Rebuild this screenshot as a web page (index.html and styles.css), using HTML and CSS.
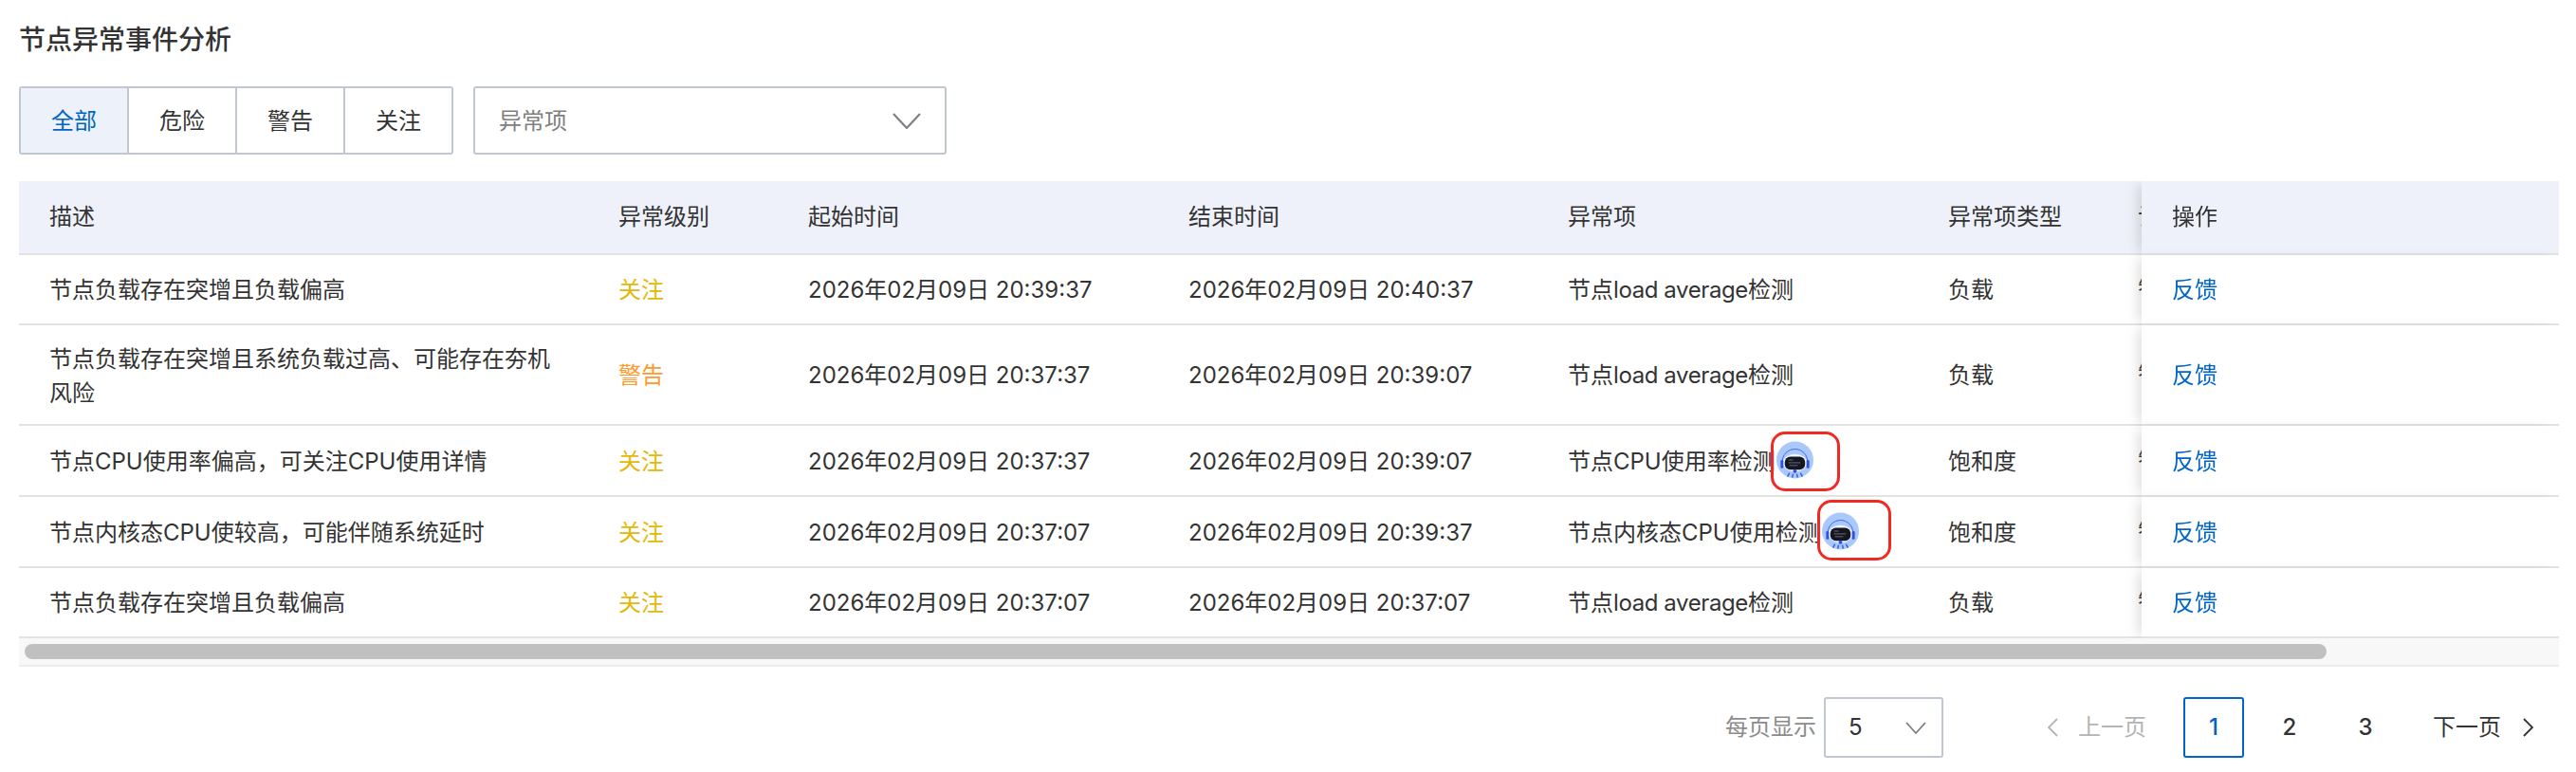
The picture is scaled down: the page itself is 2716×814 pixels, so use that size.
FILE: index.html
```html
<!DOCTYPE html>
<html lang="zh-CN">
<head>
<meta charset="utf-8">
<title>节点异常事件分析</title>
<link rel="stylesheet" href="styles.css">
</head>
<body>
<svg class="defs" width="0" height="0" aria-hidden="true">
  <symbol id="bot" viewBox="0 0 40 40">
    <circle cx="20" cy="20" r="20" fill="#a9c9fc"/>
    <path d="M6 24 C6 3 34 3 34 24" fill="none" stroke="#3f63ea" stroke-width="1"/>
    <ellipse cx="20" cy="23" rx="13" ry="9.5" fill="#f1f5fe"/>
    <rect x="4.5" y="20" width="3" height="9" rx="1.4" fill="#2f50e0"/>
    <rect x="32.5" y="20" width="3" height="9" rx="1.4" fill="#2f50e0"/>
    <rect x="9" y="16.5" width="22" height="14" rx="6" fill="#15171f"/>
    <path d="M13 20h5M13 23h13M14 26h9" stroke="#858ba8" stroke-width=".7" fill="none"/>
    <circle cx="20" cy="32" r="2" fill="#2f50e0"/>
    <path d="M12 38l2-4M17 39l1-4M23 39l-1-4M28 38l-2-4" stroke="#3d62e8" stroke-width="1.6" fill="none"/>
  </symbol>
</svg>
<main class="page">
  <h1 class="title">节点异常事件分析</h1>
  <div class="filters">
    <div class="tabs">
      <button class="tab tab-active">全部</button>
      <button class="tab">危险</button>
      <button class="tab">警告</button>
      <button class="tab">关注</button>
    </div>
    <div class="select">
      <span class="placeholder">异常项</span>
      <svg class="select-arrow" viewBox="0 0 30 17"><path d="M1 1l14 15L29 1" fill="none" stroke="#7d8288" stroke-width="2.2"/></svg>
    </div>
  </div>
  <div class="table-wrap">
    <table class="table">
      <colgroup>
        <col class="c-desc"><col class="c-level"><col class="c-start"><col class="c-end"><col class="c-item"><col class="c-type"><col class="c-extra"><col class="c-op">
      </colgroup>
      <thead>
        <tr><th>描述</th><th>异常级别</th><th>起始时间</th><th>结束时间</th><th>异常项</th><th>异常项类型</th><th>诊断结果</th><th class="op">操作</th></tr>
      </thead>
      <tbody>
        <tr><td>节点负载存在突增且负载偏高</td><td class="attn">关注</td><td>2026年02月09日 20:39:37</td><td>2026年02月09日 20:40:37</td><td>节点<span class="latin">load average</span>检测</td><td>负载</td><td>智能诊断</td><td class="op"><a class="link">反馈</a></td></tr>
        <tr><td class="wrap">节点负载存在突增且系统负载过高、可能存在夯机风险</td><td class="warn">警告</td><td>2026年02月09日 20:37:37</td><td>2026年02月09日 20:39:07</td><td>节点<span class="latin">load average</span>检测</td><td>负载</td><td>智能诊断</td><td class="op"><a class="link">反馈</a></td></tr>
        <tr class="r3"><td>节点CPU使用率偏高，可关注CPU使用详情</td><td class="attn">关注</td><td>2026年02月09日 20:37:37</td><td>2026年02月09日 20:39:07</td><td><span class="item">节点CPU使用率检测<span class="bot"><svg class="bot-img"><use href="#bot"/></svg><i class="mark"></i></span></span></td><td>饱和度</td><td>智能诊断</td><td class="op"><a class="link">反馈</a></td></tr>
        <tr class="r3"><td>节点内核态CPU使较高，可能伴随系统延时</td><td class="attn">关注</td><td>2026年02月09日 20:37:07</td><td>2026年02月09日 20:39:37</td><td><span class="item">节点内核态CPU使用检测<span class="bot"><svg class="bot-img"><use href="#bot"/></svg><i class="mark mark-wide"></i></span></span></td><td>饱和度</td><td>智能诊断</td><td class="op"><a class="link">反馈</a></td></tr>
        <tr><td>节点负载存在突增且负载偏高</td><td class="attn">关注</td><td>2026年02月09日 20:37:07</td><td>2026年02月09日 20:37:07</td><td>节点<span class="latin">load average</span>检测</td><td>负载</td><td>智能诊断</td><td class="op"><a class="link">反馈</a></td></tr>
      </tbody>
    </table>
  </div>
  <div class="scrollbar"><div class="thumb"></div></div>
  <div class="pager">
    <span class="size-label">每页显示</span>
    <div class="size">
      <span>5</span>
      <svg class="size-arrow" viewBox="0 0 22 13"><path d="M1 1l10 11L21 1" fill="none" stroke="#7d8288" stroke-width="1.8"/></svg>
    </div>
    <div class="pages">
      <span class="nav nav-off"><svg class="chev" viewBox="0 0 12 20"><path d="M11 1L2 10l9 9" fill="none" stroke="#b4b4b4" stroke-width="1.8"/></svg>上一页</span>
      <span class="num num-on">1</span>
      <span class="num">2</span>
      <span class="num">3</span>
      <span class="nav">下一页<svg class="chev" viewBox="0 0 12 20"><path d="M1 1l9 9-9 9" fill="none" stroke="#333" stroke-width="1.8"/></svg></span>
    </div>
  </div>
</main>
</body>
</html>
```

FILE: styles.css
```css
* { box-sizing: border-box; }
html, body { margin: 0; background: #fff; }
body {
  font-family: Inter, "Noto Sans CJK SC", sans-serif;
  font-size: 24px;
  line-height: 36px;
  color: #333;
}
.defs { position: absolute; }
.page { padding: 22px 18px 0 20px; }
.title {
  margin: 0;
  font-size: 28px;
  line-height: 40px;
  font-weight: 500;
  color: #333;
}
.filters { display: flex; gap: 21px; margin-top: 29px; }
.tabs {
  display: flex;
  height: 72px;
  border: 2px solid #c1c7d2;
  border-radius: 3px;
}
.tab {
  width: 114px;
  padding: 2px 0 0;
  border: 0;
  border-left: 2px solid #c1c7d2;
  background: #fff;
  font: inherit;
  color: #333;
}
.tab:first-child { width: 112px; border-left: 0; }
.tab-active { background: #edf1f9; color: #0064c8; }
.select {
  display: flex;
  align-items: center;
  justify-content: space-between;
  width: 499px;
  height: 72px;
  padding: 0 25px;
  border: 2px solid #c1c7d2;
  border-radius: 3px;
}
.placeholder { color: #808080; padding-top: 2px; }
.select-arrow { width: 30px; height: 17px; }
.table-wrap { margin-top: 28px; overflow: hidden; }
.table {
  width: 2941px;
  table-layout: fixed;
  border-collapse: separate;
  border-spacing: 0;
}
.c-desc { width: 600px; }
.c-level { width: 200px; }
.c-start { width: 401px; }
.c-end { width: 400px; }
.c-item { width: 401px; }
.c-type { width: 200px; }
.c-extra { width: 299px; }
.c-op { width: 440px; }
th, td {
  padding: 0 32px;
  text-align: left;
  font-weight: 400;
  white-space: nowrap;
  border-bottom: 2px solid #e3e3e3;
  background: #fff;
}
th { height: 78px; background: #eef1f9; }
td { height: 74px; padding-top: 2px; }
.r3 td { height: 75px; }
td.wrap { padding: 18px 32px 14px; white-space: normal; }
.op {
  position: sticky;
  right: 0;
  z-index: 1;
  box-shadow: -8px 0 12px -4px rgba(0, 0, 0, .13);
}
.attn { color: #e3b80a; }
.warn { color: #ff9a2e; }
.link { color: #0064c8; }
.latin { letter-spacing: -.4px; }
.item { display: inline-flex; align-items: center; }
.bot { position: relative; display: inline-flex; margin: 0 0 4px 1px; }
.bot-img { width: 39px; height: 40px; }
.mark {
  position: absolute;
  left: -6px;
  top: -10px;
  width: 73px;
  height: 63px;
  border: 3.5px solid #f02a22;
  border-radius: 15px;
}
.mark-wide { left: -5px; top: -13px; width: 78px; height: 64px; }
.scrollbar {
  padding: 6px;
  height: 30px;
  background: #f8f8f8;
  border-bottom: 2px solid #ececec;
}
.thumb {
  width: 2427px;
  height: 16px;
  border-radius: 8px;
  background: #c0c0c0;
}
.pager {
  display: flex;
  align-items: center;
  margin-top: 32px;
  padding-left: 1799px;
}
.size-label { color: #8c8c8c; width: 104px; }
.size {
  display: flex;
  align-items: center;
  justify-content: space-between;
  width: 126px;
  height: 64px;
  padding: 0 16px 0 24px;
  border: 2px solid #c1c7d2;
  border-radius: 3px;
}
.size-arrow { width: 22px; height: 13px; }
.pages { display: flex; align-items: center; margin-left: 109px; }
.nav { display: inline-flex; align-items: center; gap: 23px; }
.nav-off { gap: 21px; color: #b4b4b4; margin-right: 39px; }
.pages .nav:last-child { margin-left: 39px; }
.chev { width: 12px; height: 20px; }
.num {
  width: 64px;
  height: 64px;
  margin-right: 16px;
  line-height: 60px;
  text-align: center;
  border: 2px solid transparent;
  border-radius: 3px;
  font-weight: 500;
}
.num:nth-of-type(4) { margin-right: 0; }
.num-on { color: #0064c8; border-color: #0064c8; }
```
